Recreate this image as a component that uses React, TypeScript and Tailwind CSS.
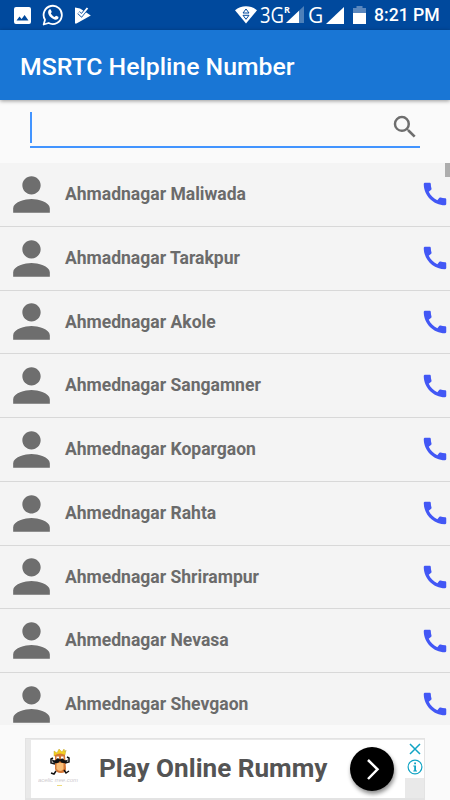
import { MdCall, MdPerson, MdSearch } from "react-icons/md";

const contacts = [
  "Ahmadnagar Maliwada",
  "Ahmadnagar Tarakpur",
  "Ahmednagar Akole",
  "Ahmednagar Sangamner",
  "Ahmednagar Kopargaon",
  "Ahmednagar Rahta",
  "Ahmednagar Shrirampur",
  "Ahmednagar Nevasa",
  "Ahmednagar Shevgaon",
];

function PictureIcon() {
  return (
    <svg className="h-[17px] w-[17px]" viewBox="0 0 17 17">
      <path
        fill="#fff"
        fillRule="evenodd"
        d="M2 0h13a2 2 0 0 1 2 2v13a2 2 0 0 1-2 2H2a2 2 0 0 1-2-2V2a2 2 0 0 1 2-2zM2.5 13.5h12L10.6 8 7.6 12 5.5 9.5z"
      />
    </svg>
  );
}

function WhatsAppIcon() {
  return (
    <svg className="h-[22px] w-[22px]" viewBox="0 0 22 22">
      <path
        fill="none"
        stroke="#fff"
        strokeWidth="1.8"
        strokeLinejoin="round"
        d="M1.7 20.5l1.3-4.8A9.1 9.1 0 1 1 6.6 19z"
      />
      <path
        fill="#fff"
        d="M7.3 5.6c.4-.4 1.2-.4 1.5.1l.9 2.1c.1.5-.8 1.3-.8 1.6.8 1.6 2.1 2.8 3.8 3.5.4 0 1-1.3 1.5-1.2l2.1 1c.4.4.2 1.7-.5 2.3-2 1.6-5.2.2-7.3-1.9C6.3 11 5.2 7.6 7.3 5.6z"
      />
    </svg>
  );
}

function PlayCheckIcon() {
  return (
    <svg className="h-[17px] w-4" viewBox="0 0 16 17">
      <path fill="#fff" d="M0 .5L5 1.500 9 4 15.800 8.500 1.500 16.600H0z" />
      <path fill="none" stroke="#00499d" strokeWidth="3.2" d="M3.500 5.500l3 2.800L12.500 1" />
      <path fill="none" stroke="#fff" strokeWidth="1.9" d="M3.500 5.500l3 2.800L12.500 1" />
    </svg>
  );
}

function WifiIcon() {
  return (
    <svg className="h-[18px] w-[22px]" viewBox="0 0 22 18">
      <path fill="#fff" d="M0 4.300C6-1.200 16-1.200 22 4.300L11 17.500z" />
      <path
        fill="none"
        stroke="#00499d"
        strokeWidth="1"
        d="M8 7l3-4 3 4zM8 9.300h6l-3 4z"
      />
    </svg>
  );
}

function StatusBar() {
  return (
    <div className="flex h-[30px] shrink-0 items-center bg-[#00499d] text-white">
      <div className="flex flex-1 items-center pl-[14px]">
        <PictureIcon />
        <div className="ml-[11px]">
          <WhatsAppIcon />
        </div>
        <div className="ml-[11px]">
          <PlayCheckIcon />
        </div>
      </div>
      <div className="flex items-center pr-[11px]">
        <WifiIcon />
        <div className="ml-[3px] flex h-5 w-[44px] items-start font-['Open_Sans',sans-serif]">
          <span className="w-[24px] origin-left scale-x-[0.880] text-[21px] leading-[21px]">3G</span>
          <span className="w-[6px] text-[9px] leading-[9px] font-bold">R</span>
          <svg className="-ml-[4px] mt-[1px] h-[17px] w-[18px] shrink-0" viewBox="0 0 18 17">
            <path fill="#4d80b9" d="M0 17L18 0v17z" />
            <path fill="#fff" d="M0 17L13 4.700V17z" />
          </svg>
        </div>
        <span className="ml-[4px] w-[15px] font-['Open_Sans',sans-serif] text-[21px] leading-5">G</span>
        <svg className="ml-[3px] h-[17px] w-[18px]" viewBox="0 0 18 17">
          <path fill="#fff" d="M0 17L18 0v17z" />
        </svg>
        <svg className="ml-[9px] h-[18px] w-[13px]" viewBox="0 0 13 18">
          <path fill="#5a87be" d="M0 2h3.500V0h6v2H13v6H0z" />
          <path fill="#fff" d="M0 7h13v11H0z" />
        </svg>
        <span className="ml-2 w-[65px] text-[17.600px] leading-5 font-medium whitespace-nowrap">
          8:21 PM
        </span>
      </div>
    </div>
  );
}

function ContactRow({ name }: { name: string }) {
  return (
    <div className="flex h-[63.750px] shrink-0 items-center border-b border-[#d8d8d8] bg-[#f4f4f4] pl-[4px] last:border-b-0">
      <MdPerson className="h-[55px] w-[55px] shrink-0 text-[#6e6e6e]" />
      <span className="ml-[6px] flex-1 text-[17.550px] font-bold whitespace-nowrap text-[#6b6b6b]">
        {name}
      </span>
      <MdCall className="h-[30px] w-[30px] shrink-0 text-[#4257f5]" />
    </div>
  );
}

function AdLogo() {
  return (
    <svg className="h-[40px] w-[42px]" viewBox="0 0 42 40">
      <path fill="#f3cf22" stroke="#b89a18" strokeWidth=".4" d="M16 2l3 2 2-4 3 3 2-3 1 3 1-2-1 5-11 1z" />
      <path fill="#d47735" d="M17 6q5-3 10 0l1 14q0 4-5 4t-6-4z" />
      <path fill="#f8bd77" d="M18.500 14h7v6q-3 4-7 0z" />
      <path fill="#fff" d="M18.500 7.500h2.500v2.500h-2.500zM23 7.500h2.500v2.500H23z" />
      <path
        fill="#111"
        d="M22 10.500q3-2 4 .5 3 1 4-1-1 5-5 4-2 0-3-2-2 3-5 2-3 0-3-4 1 2 4 1 1-3 4-.500z"
      />
      <path
        fill="none"
        stroke="#111"
        strokeWidth="1.500"
        d="M17 15l-4-1 0-4 2-1M27 14l4-1 0-4-2-1M18 22l-2 3-3-1M26 21l2 3 3-2"
      />
      <text
        x="0"
        y="33"
        fill="#cfcccf"
        fontFamily="Liberation Sans, sans-serif"
        fontSize="6"
        fontStyle="italic"
        textLength="40"
      >
        acelic rree.com
      </text>
      <path stroke="#eedb7e" d="M19 36.500h5" />
    </svg>
  );
}

function AdBanner() {
  return (
    <div className="ml-[25px] flex h-[62px] w-[400px] shrink-0 border border-b-2 border-[#e3e3e3] bg-[#e9e9e9] pt-px pl-[5px]">
      <div className="flex flex-1 items-center bg-white">
        <div className="ml-[7px]">
          <AdLogo />
        </div>
        <span className="-mt-[3px] ml-[19px] w-[251px] text-[26.100px] leading-8 font-bold whitespace-nowrap text-[#545454]">
          Play Online Rummy
        </span>
        <div className="h-11 w-11 shrink-0 rounded-full bg-black shadow-[1px_3px_4px_rgba(0,0,0,0.450)]">
          <svg className="h-11 w-11" viewBox="0 0 44 44">
            <path fill="none" stroke="#fff" strokeWidth="2.500" d="M18 13l9.500 9.300L18 32" />
          </svg>
        </div>
      </div>
      <div className="flex h-[38px] w-[19px] shrink-0 flex-col items-center gap-[4px] bg-white pt-[3px]">
        <svg className="h-3 w-3 shrink-0" viewBox="0 0 12 12">
          <path stroke="#11a4c4" strokeWidth="1.500" d="M1 1l10 10M11 1L1 11" />
        </svg>
        <svg className="h-4 w-4 shrink-0" viewBox="0 0 16 16">
          <circle cx="8" cy="8" r="6.900" fill="none" stroke="#11a4c4" strokeWidth="1.200" />
          <path fill="#11a4c4" d="M7.200 3.500H9v1.700H7.200zM6.300 6.500H9v5h1v1H6.300v-1h.9v-4h-.9z" />
        </svg>
      </div>
    </div>
  );
}

export default function App() {
  return (
    <div className="flex h-[800px] w-[450px] flex-col overflow-hidden bg-[#fafafa] font-[Roboto,sans-serif]">
      <StatusBar />
      <header className="flex h-[70px] shrink-0 items-center bg-[#1976d5] pt-[3px] pl-5 shadow-[0_1px_4px_rgba(0,0,0,0.400)]">
        <h1 className="text-[24.800px] font-medium whitespace-nowrap text-white">
          MSRTC Helpline Number
        </h1>
      </header>

      <div className="mx-[30px] mt-[12px] mb-[15px] flex h-9 shrink-0 items-start border-b-2 border-[#4294ff]">
        <div className="h-[31px] w-[2px] bg-[#4294ff]" />
        <MdSearch className="ml-auto h-[30px] w-[30px] text-[#6e6e6e]" />
      </div>

      <div className="relative flex h-[562px] shrink-0 flex-col overflow-hidden">
        {contacts.map((name) => (
          <ContactRow key={name} name={name} />
        ))}
        {/* scroll thumb */}
        <div className="absolute top-0 right-0 h-[14px] w-[5px] bg-[#adadad]" />
      </div>

      <div className="h-[13px] shrink-0" />
      <AdBanner />
    </div>
  );
}
